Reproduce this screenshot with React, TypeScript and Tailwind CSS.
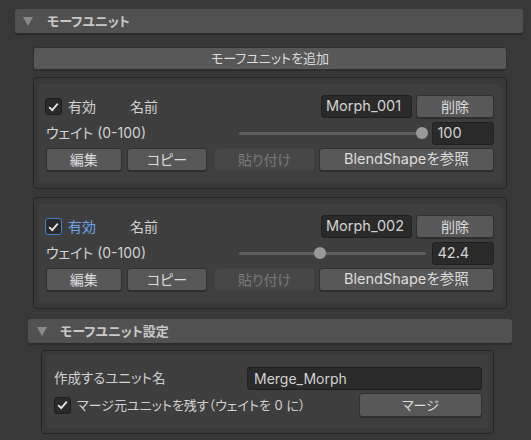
import React from 'react';

const font = "font-['Inter','Noto_Sans_CJK_JP',sans-serif] [font-feature-settings:'palt']";

function Triangle() {
  return (
    <svg width="10" height="9" viewBox="0 0 10 9" className="shrink-0">
      <polygon points="0,0 10,0 5,9" fill="#8a8a8a" />
    </svg>
  );
}

function Check({ active }: { active?: boolean }) {
  return (
    <div
      className={`w-[17px] h-[17px] rounded-[3px] flex items-center justify-center shrink-0 bg-[#2a2a2a] border ${
        active ? 'border-[#3f7fd0]' : 'border-[#1e1e1e]'
      }`}
    >
      <svg width="11" height="10" viewBox="0 0 11 10">
        <path d="M1.2 5.2 L4.2 8.2 L9.8 1.6" fill="none" stroke="#e8e8e8" strokeWidth="1.8" />
      </svg>
    </div>
  );
}

function Btn({ children, className = '', disabled }: { children: React.ReactNode; className?: string; disabled?: boolean }) {
  return (
    <div
      className={`h-[23px] rounded-[3px] flex items-center justify-center border ${
        disabled
          ? 'bg-[#474747] border-[#404040] text-[#7a7a7a]'
          : 'bg-[#585858] border-[#303030] text-[#dcdcdc] shadow-[0_1px_0_#2c2c2c]'
      } ${className}`}
    >
      {children}
    </div>
  );
}

function Field({ children, className = '' }: { children: React.ReactNode; className?: string }) {
  return (
    <div className={`h-[23px] rounded-[3px] bg-[#2a2a2a] border border-[#212121] flex items-center pl-[4px] text-[#d2d2d2] ${className}`}>
      {children}
    </div>
  );
}

function UnitCard({ name, value, active }: { name: string; value: number; active?: boolean }) {
  const pct = value / 100;
  return (
    <div className="rounded-[4px] border border-[#242424] bg-[#393939] pt-[6px] px-[4px] pb-[5px]">
      <div className="bg-[#3e3e3e] rounded-[2px] pt-[11px] pb-[12px] pl-[7px] pr-[8px] flex flex-col">
        <div className="flex items-center h-[23px]">
          <Check active={active} />
          <span className={`ml-[6px] ${active ? 'text-[#6aa5ec]' : 'text-[#d2d2d2]'}`}>有効</span>
          <span className="ml-[34px] text-[#d2d2d2]">名前</span>
          <Field className="ml-auto w-[91px] text-[14.5px]">{name}</Field>
          <Btn className="ml-[4px] w-[78px]">削除</Btn>
        </div>
        <div className="flex items-center h-[22px] mt-[4px]">
          <span className="w-[194px] shrink-0 pl-[1px] text-[#d2d2d2]">ウェイト (0-100)</span>
          <div className="relative w-[189px] h-[12px] flex items-center">
            <div className="w-full h-[3px] bg-[#5e5e5e] rounded-full" />
            <div
              className="absolute top-0 w-[12px] h-[12px] rounded-full bg-[#999999]"
              style={{ left: `${pct * 177}px` }}
            />
          </div>
          <Field className="ml-[6px] w-[62px] h-[22px] text-[14.5px]">{value}</Field>
        </div>
        <div className="flex items-center mt-[4px] pl-[1px]">
          <Btn className="w-[76px]">編集</Btn>
          <Btn className="ml-[5px] w-[81px]">コピー</Btn>
          <Btn className="ml-[7px] w-[101px]" disabled>貼り付け</Btn>
          <Btn className="ml-[4px] w-[176px] text-[14.5px]">BlendShapeを参照</Btn>
        </div>
      </div>
    </div>
  );
}

export default function App() {
  return (
    <div className={`w-[531px] h-[440px] bg-[#383838] overflow-hidden text-[14px] leading-none pt-[9px] ${font}`}>
      <div className="ml-[15px] mr-[8px] h-[24px] rounded-[3px] bg-[#515151] shadow-[0_2px_1px_#2c2c2c] flex items-center pl-[8px]">
        <Triangle />
        <span className="ml-[14px] font-bold text-[13px] text-[#c8c8c8]">モーフユニット</span>
      </div>

      <div className="ml-[33px] mr-[24px] mt-[14px] flex flex-col">
        <Btn className="w-full text-[13px]">モーフユニットを追加</Btn>
        <div className="mt-[7px]">
          <UnitCard name="Morph_001" value={100} />
        </div>
        <div className="mt-[8px]">
          <UnitCard name="Morph_002" value={42.4} active />
        </div>
      </div>

      <div className="ml-[28px] mr-[19px] mt-[10px] h-[24px] rounded-[3px] bg-[#515151] shadow-[0_2px_1px_#2c2c2c] flex items-center pl-[9px]">
        <Triangle />
        <span className="ml-[13px] font-bold text-[13px] text-[#c8c8c8]">モーフユニット設定</span>
      </div>

      <div className="ml-[41px] mr-[37px] mt-[7px] rounded-[4px] border border-[#242424] bg-[#393939] pt-[4px] px-[4px] pb-[5px]">
        <div className="bg-[#3e3e3e] rounded-[2px] pt-[12px] pb-[11px] pl-[8px] pr-[7px] flex flex-col">
          <div className="flex items-center h-[23px]">
            <span className="text-[#d2d2d2] text-[13.5px]">作成するユニット名</span>
            <Field className="ml-auto w-[235px] pl-[6px]">Merge_Morph</Field>
          </div>
          <div className="flex items-center mt-[3px] h-[24px]">
            <Check />
            <span className="ml-[6px] text-[#d2d2d2] text-[13px]">マージ元ユニットを残す（ウェイトを 0 に）</span>
            <Btn className="ml-auto w-[123px] h-[24px] text-[13px]">マージ</Btn>
          </div>
        </div>
      </div>
    </div>
  );
}
